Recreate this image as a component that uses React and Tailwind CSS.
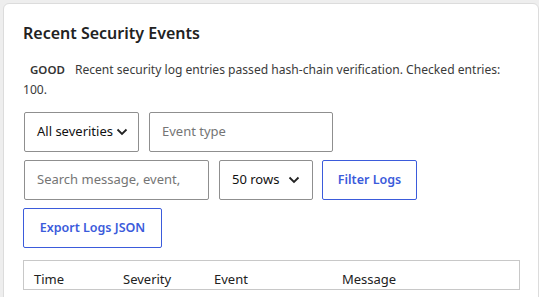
import React from "react";

function Chevron({ className = "" }) {
  return (
    <svg width="12" height="8" viewBox="0 0 12 8" className={className}>
      <path d="M1.5 1.5 L6 6 L10.5 1.5" fill="none" stroke="#222" strokeWidth="1.8" />
    </svg>
  );
}

export default function App() {
  return (
    <div className="min-h-[297px] bg-[#eeeeee] pt-[3px] pl-[3px] font-['Noto_Sans',sans-serif]">
      <div className="h-[300px] rounded-tl-[6px] rounded-tr-[6px] border border-[#dcdcdc] bg-white pl-[19px] pr-[19px] pt-[17px]">
        <h2 className="text-[16px] font-semibold leading-[24px] text-[#222]">Recent Security Events</h2>
        <p className="mt-[15px] text-[12.1px] leading-[20px] text-[#3a3a3a]">
          <span className="mr-[10px] ml-[7px] text-[11.5px] font-semibold text-[#333]">GOOD</span>
          Recent security log entries passed hash-chain verification. Checked entries: 100.
        </p>
        <div className="mt-[12px] flex flex-col gap-[8px]">
          <div className="flex gap-[10px] pl-[1px]">
            <div className="flex h-[40px] w-[115px] items-center gap-[3px] rounded-[2px] border border-[#8f8f8f] pl-[12px] text-[13px] text-[#111]">
              <span>All severities</span>
              <Chevron />
            </div>
            <div className="flex h-[40px] w-[184px] items-center rounded-[2px] border border-[#8f8f8f] pl-[12px] text-[13px] text-[#757575]">
              Event type
            </div>
          </div>
          <div className="flex gap-[10px] pl-[1px]">
            <div className="flex h-[40px] w-[185px] items-center rounded-[2px] border border-[#8f8f8f] pl-[12px] text-[13px] text-[#757575]">
              Search message, event,
            </div>
            <div className="flex h-[40px] w-[94px] items-center justify-between rounded-[2px] border border-[#8f8f8f] pl-[12px] pr-[12px] text-[13px] text-[#111]">
              <span>50 rows</span>
              <Chevron />
            </div>
            <div className="-ml-[1px] flex h-[40px] w-[95px] items-center justify-center rounded-[2px] border border-[#3b5bdb] text-[12.5px] font-semibold text-[#3b5bdb]">
              Filter Logs
            </div>
          </div>
          <div className="flex">
            <div className="flex h-[40px] w-[139px] items-center justify-center rounded-[2px] border border-[#3b5bdb] text-[12.5px] font-semibold text-[#3b5bdb]">
              Export Logs JSON
            </div>
          </div>
        </div>
        <div className="mt-[12px] w-[497px] border border-[#c8c8c8]">
          <div className="grid grid-cols-[89px_91px_128px_1fr] pl-[10px] pt-[8px] text-[13px] leading-[20px] text-[#222]">
            <div>Time</div>
            <div>Severity</div>
            <div>Event</div>
            <div>Message</div>
          </div>
        </div>
      </div>
    </div>
  );
}
